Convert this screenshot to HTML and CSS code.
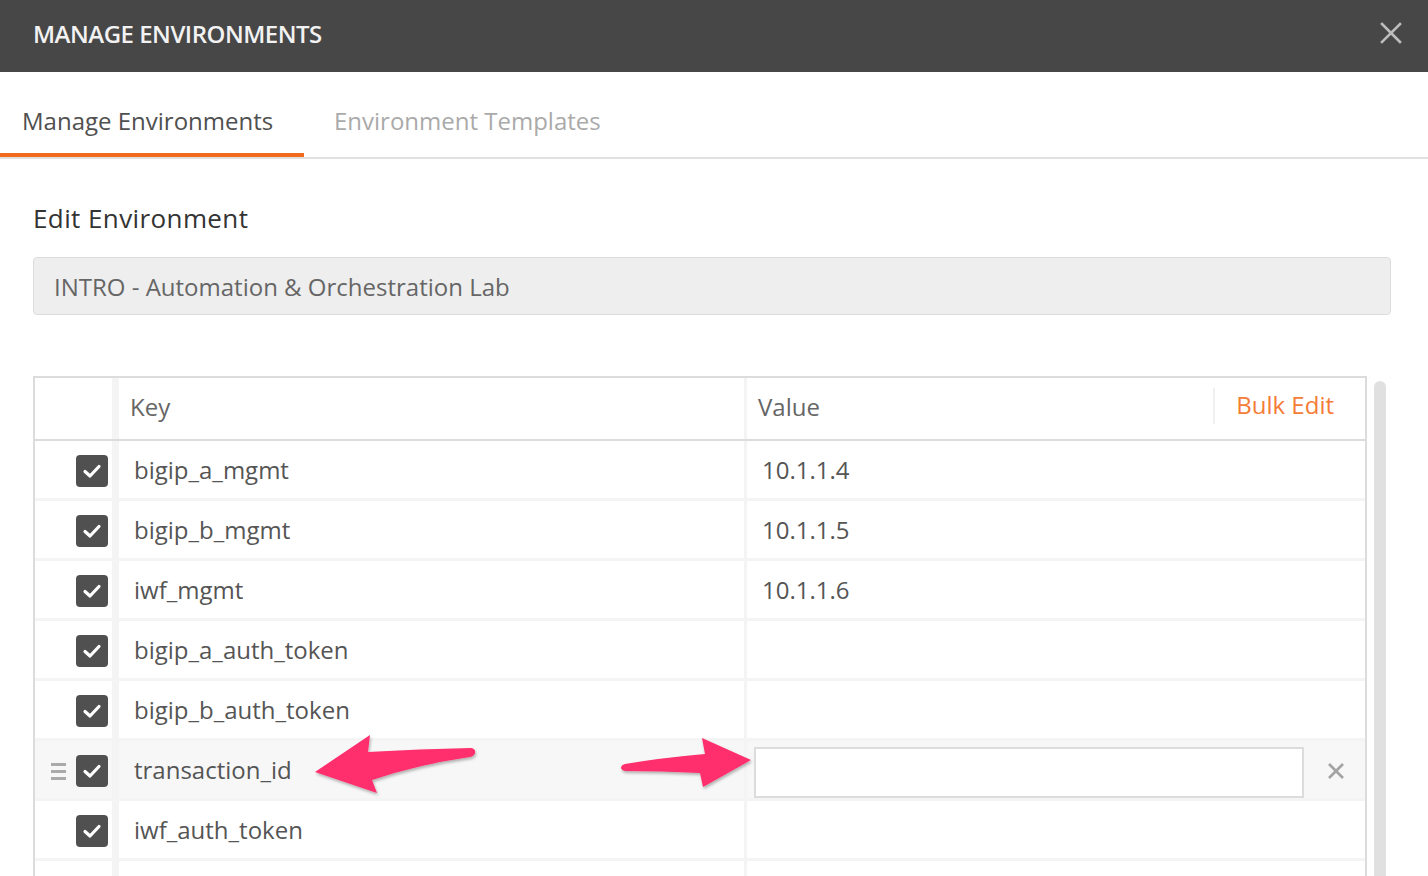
FILE: index.html
```html
<!DOCTYPE html>
<html>
<head>
<meta charset="utf-8">
<link rel="stylesheet" href="styles.css">
</head>
<body>
<div class="modal">
  <header class="topbar">
    <h1 class="title">MANAGE ENVIRONMENTS</h1>
    <svg class="close" width="22" height="22" viewBox="0 0 22 22"><path d="M2 2 L20 20 M20 2 L2 20" stroke="#bdbdbd" stroke-width="2.6" stroke-linecap="square"/></svg>
  </header>
  <nav class="tabs">
    <div class="tab active">Manage Environments</div>
    <div class="tab">Environment Templates</div>
  </nav>
  <main class="content">
    <h2 class="heading">Edit Environment</h2>
    <div class="name-input">INTRO - Automation &amp; Orchestration Lab</div>
    <div class="table-wrap">
      <div class="table">
        <div class="row head">
          <div class="c-check"></div>
          <div class="c-key">Key</div>
          <div class="c-val"><span>Value</span><span class="bulk">Bulk Edit</span></div>
        </div>
        <div class="row">
          <div class="c-check"><span class="cb"><svg viewBox="0 0 32 32"><path d="M9 16.5 L14 21 L23 11.5" fill="none" stroke="#fff" stroke-width="3.2" stroke-linecap="round" stroke-linejoin="round"/></svg></span></div>
          <div class="c-key">bigip_a_mgmt</div>
          <div class="c-val">10.1.1.4</div>
        </div>
        <div class="row">
          <div class="c-check"><span class="cb"><svg viewBox="0 0 32 32"><path d="M9 16.5 L14 21 L23 11.5" fill="none" stroke="#fff" stroke-width="3.2" stroke-linecap="round" stroke-linejoin="round"/></svg></span></div>
          <div class="c-key">bigip_b_mgmt</div>
          <div class="c-val">10.1.1.5</div>
        </div>
        <div class="row">
          <div class="c-check"><span class="cb"><svg viewBox="0 0 32 32"><path d="M9 16.5 L14 21 L23 11.5" fill="none" stroke="#fff" stroke-width="3.2" stroke-linecap="round" stroke-linejoin="round"/></svg></span></div>
          <div class="c-key">iwf_mgmt</div>
          <div class="c-val">10.1.1.6</div>
        </div>
        <div class="row">
          <div class="c-check"><span class="cb"><svg viewBox="0 0 32 32"><path d="M9 16.5 L14 21 L23 11.5" fill="none" stroke="#fff" stroke-width="3.2" stroke-linecap="round" stroke-linejoin="round"/></svg></span></div>
          <div class="c-key">bigip_a_auth_token</div>
          <div class="c-val"></div>
        </div>
        <div class="row">
          <div class="c-check"><span class="cb"><svg viewBox="0 0 32 32"><path d="M9 16.5 L14 21 L23 11.5" fill="none" stroke="#fff" stroke-width="3.2" stroke-linecap="round" stroke-linejoin="round"/></svg></span></div>
          <div class="c-key">bigip_b_auth_token</div>
          <div class="c-val"></div>
        </div>
        <div class="row hover">
          <div class="c-check"><span class="handle"><i></i><i></i><i></i></span><span class="cb"><svg viewBox="0 0 32 32"><path d="M9 16.5 L14 21 L23 11.5" fill="none" stroke="#fff" stroke-width="3.2" stroke-linecap="round" stroke-linejoin="round"/></svg></span></div>
          <div class="c-key">transaction_id</div>
          <div class="c-val edit"><span class="val-input"></span><svg class="del" width="18" height="18" viewBox="0 0 18 18"><path d="M2 2 L16 16 M16 2 L2 16" stroke="#a3a3a3" stroke-width="2.6"/></svg></div>
        </div>
        <div class="row">
          <div class="c-check"><span class="cb"><svg viewBox="0 0 32 32"><path d="M9 16.5 L14 21 L23 11.5" fill="none" stroke="#fff" stroke-width="3.2" stroke-linecap="round" stroke-linejoin="round"/></svg></span></div>
          <div class="c-key">iwf_auth_token</div>
          <div class="c-val"></div>
        </div>
        <div class="row">
          <div class="c-check"></div>
          <div class="c-key"></div>
          <div class="c-val"></div>
        </div>
      </div>
      <div class="scrollbar"></div>
    </div>
  </main>
  <svg class="arrows" width="1428" height="876" viewBox="0 0 1428 876">
    <defs>
      <filter id="sh" x="-20%" y="-20%" width="140%" height="160%">
        <feDropShadow dx="1" dy="2" stdDeviation="1.5" flood-color="#000" flood-opacity="0.3"/>
      </filter>
    </defs>
    <path filter="url(#sh)" fill="#ff2d6c" d="M315 772 L370 735 L368 752 Q420 749 471 748 Q476 749 475 753 Q474 756 470 757 Q420 764 372 780 L377 793 Z"/>
    <path filter="url(#sh)" fill="#ff2d6c" d="M751 760 L702 738 L705 754 Q660 758 625 764 Q621 765 621 768 Q622 771 626 771 Q660 771 700 773 L703 787 Z"/>
  </svg>
</div>
</body>
</html>
```
FILE: styles.css
```css
* { box-sizing: border-box; }
html, body { margin: 0; padding: 0; }
body {
  width: 1428px;
  height: 876px;
  overflow: hidden;
  background: #fff;
  font-family: "Open Sans", "DejaVu Sans", sans-serif;
  color: #555;
}
.modal { position: relative; width: 1428px; height: 876px; overflow: hidden; }
.topbar {
  height: 72px;
  background: #474747;
  display: flex;
  align-items: center;
  justify-content: space-between;
  padding: 0 26px 0 33px;
}
.title {
  margin: -6px 0 0 0;
  font-size: 24px;
  font-weight: 600;
  letter-spacing: -0.5px;
  color: #f2f2f2;
}
.close { display: block; margin-top: -6px; }
.tabs {
  display: flex;
  border-bottom: 2px solid #e0e0e0;
  height: 87px;
}
.tab {
  padding: 34px 22px 0 22px;
  font-size: 24px;
  line-height: 30px;
  color: #aaa;
  height: 85px;
}
.tab.active {
  color: #505050;
  border-bottom: 4px solid #f26b1d;
  width: 304px;
  margin-right: 8px;
}
.content { padding: 0 37px 0 33px; }
.heading {
  margin: 43px 0 0 0;
  font-size: 26px;
  line-height: 32px;
  font-weight: 500;
  letter-spacing: 0.4px;
  color: #333;
}
.name-input {
  margin-top: 23px;
  height: 58px;
  background: #eeeeee;
  border: 1.5px solid #dcdcdc;
  border-radius: 4px;
  padding: 0 20px;
  display: flex;
  align-items: center;
  font-size: 24px;
  color: #666;
}
.table-wrap {
  margin-top: 61px;
  display: flex;
  align-items: flex-start;
}
.table {
  width: 1334px;
  border: 2px solid #dcdcdc;
  border-bottom: none;
  background: #fff;
}
.scrollbar {
  width: 12px;
  height: 500px;
  margin-left: 7px;
  margin-top: 5px;
  background: #e0e0e0;
  border-radius: 6px 6px 0 0;
}
.row {
  display: flex;
  height: 60px;
  border-bottom: 3px solid #f4f4f4;
  font-size: 24px;
}
.row.head {
  height: 63px;
  border-bottom: 2px solid #dcdcdc;
  color: #666;
}
.row > div {
  display: flex;
  align-items: center;
}
.head > div { padding-bottom: 5px; }
.c-check {
  width: 84px;
  border-right: 7px solid #f4f4f4;
  justify-content: flex-end;
  padding-right: 4px;
  gap: 10px;
}
.c-key {
  width: 628px;
  border-right: 3px solid #f4f4f4;
  padding-left: 15px;
  color: #555;
}
.head .c-key { padding-left: 11px; color: #666; }
.c-val {
  flex: 1;
  padding-left: 15px;
  color: #555;
}
.head .c-val {
  padding-left: 11px;
  justify-content: space-between;
  color: #666;
}
.bulk {
  color: #f57c36;
  border-left: 2px solid #f0f0f0;
  padding: 0 31px 0 21px;
  height: 36px;
  line-height: 34px;
}
.cb {
  width: 32px;
  height: 32px;
  background: #505050;
  border-radius: 4px;
  display: block;
  margin-top: 3px;
}
.cb svg { width: 32px; height: 32px; display: block; }
.handle {
  display: flex;
  flex-direction: column;
  gap: 4px;
  width: 15px;
  margin-top: 3px;
}
.handle i {
  display: block;
  height: 3px;
  background: #aaa;
}
.row.hover, .row.hover > div { background: #f7f7f7; }
.c-val.edit { padding-left: 7px; }
.val-input {
  width: 550px;
  height: 51px;
  background: #fff;
  border: 2px solid #dcdcdc;
  margin-top: 5px;
}
.del { margin-left: 23px; margin-top: 2px; }
.arrows { position: absolute; left: 0; top: 0; pointer-events: none; }
```
